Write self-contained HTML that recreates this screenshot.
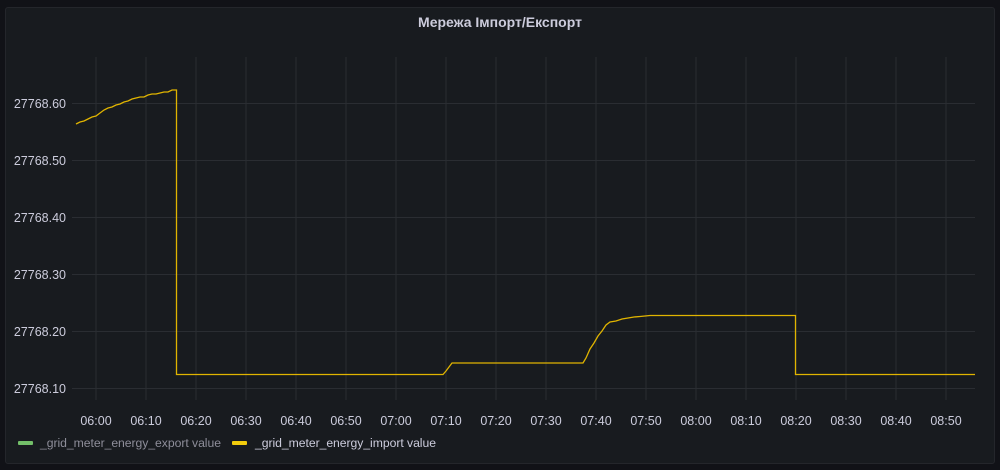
<!DOCTYPE html>
<html><head><meta charset="utf-8"><style>
body{margin:0;width:1000px;height:470px;background:#111217;overflow:hidden;font-family:"Liberation Sans",sans-serif;}
.panel{position:absolute;left:5px;top:7px;width:988px;height:455px;background:#181b1f;border:1px solid #24262b;border-radius:3px;}
</style></head><body>
<div class="panel"></div>
<svg width="1000" height="470" style="position:absolute;left:0;top:0" font-family="Liberation Sans, sans-serif">
<text x="500" y="27" text-anchor="middle" fill="#ccccdc" font-size="14" font-weight="bold">Мережа Імпорт/Експорт</text>
<g stroke="#2a2d32" stroke-width="1">
<line x1="72" x2="975" y1="103.5" y2="103.5"/><line x1="72" x2="975" y1="160.5" y2="160.5"/><line x1="72" x2="975" y1="217.5" y2="217.5"/><line x1="72" x2="975" y1="274.5" y2="274.5"/><line x1="72" x2="975" y1="331.5" y2="331.5"/><line x1="72" x2="975" y1="388.5" y2="388.5"/>
<line x1="96" x2="96" y1="57" y2="400"/><line x1="146" x2="146" y1="57" y2="400"/><line x1="196" x2="196" y1="57" y2="400"/><line x1="246" x2="246" y1="57" y2="400"/><line x1="296" x2="296" y1="57" y2="400"/><line x1="346" x2="346" y1="57" y2="400"/><line x1="396" x2="396" y1="57" y2="400"/><line x1="446" x2="446" y1="57" y2="400"/><line x1="496" x2="496" y1="57" y2="400"/><line x1="546" x2="546" y1="57" y2="400"/><line x1="596" x2="596" y1="57" y2="400"/><line x1="646" x2="646" y1="57" y2="400"/><line x1="696" x2="696" y1="57" y2="400"/><line x1="746" x2="746" y1="57" y2="400"/><line x1="796" x2="796" y1="57" y2="400"/><line x1="846" x2="846" y1="57" y2="400"/><line x1="896" x2="896" y1="57" y2="400"/><line x1="946" x2="946" y1="57" y2="400"/>
</g>
<g fill="#ccccdc" font-size="12.5" text-anchor="end">
<text x="66" y="108">27768.60</text><text x="66" y="165">27768.50</text><text x="66" y="222">27768.40</text><text x="66" y="279">27768.30</text><text x="66" y="336">27768.20</text><text x="66" y="393">27768.10</text>
</g>
<g fill="#ccccdc" font-size="12.5" text-anchor="middle">
<text x="96" y="425">06:00</text><text x="146" y="425">06:10</text><text x="196" y="425">06:20</text><text x="246" y="425">06:30</text><text x="296" y="425">06:40</text><text x="346" y="425">06:50</text><text x="396" y="425">07:00</text><text x="446" y="425">07:10</text><text x="496" y="425">07:20</text><text x="546" y="425">07:30</text><text x="596" y="425">07:40</text><text x="646" y="425">07:50</text><text x="696" y="425">08:00</text><text x="746" y="425">08:10</text><text x="796" y="425">08:20</text><text x="846" y="425">08:30</text><text x="896" y="425">08:40</text><text x="946" y="425">08:50</text>
</g>
<polyline fill="none" stroke="#e0b400" stroke-width="1.3" points="76,124 80,122 84,121 88,119 92,117 96,116 100,113 104,110 108,108 112,107 116,105 120,104 124,102 128,101 132,99 136,98 140,97 144,97 148,95 152,94 156,94 160,93 164,92 168,92 172,90 176.5,90 176.5,374.5 443,374.5 446,371 452,363 583,363 586,358 590,349 594,343 598,336 602,331 606,325 610,322 616,321 622,319 628,318 634,317 640,316.5 650,315.5 795.5,315.5 795.5,374.5 975,374.5"/>
<rect x="18" y="441" width="15" height="4" rx="1" fill="#73bf69"/>
<text x="40" y="447" fill="#8e8e9a" font-size="12.2" textLength="181">_grid_meter_energy_export value</text>
<rect x="232" y="441" width="15" height="4" rx="1" fill="#f2cc0c"/>
<text x="255" y="447" fill="#ccccdc" font-size="12.2" textLength="181">_grid_meter_energy_import value</text>
</svg>
</body></html>
